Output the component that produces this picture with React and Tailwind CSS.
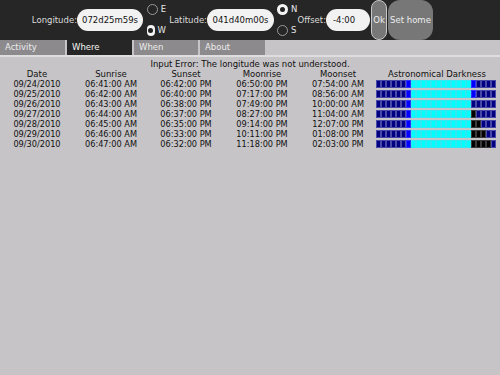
import React from "react";

const rows = [
  ["09/24/2010", "06:41:00 AM", "06:42:00 PM", "06:50:00 PM", "07:54:00 AM", "b1"],
  ["09/25/2010", "06:42:00 AM", "06:40:00 PM", "07:17:00 PM", "08:56:00 AM", "b1"],
  ["09/26/2010", "06:43:00 AM", "06:38:00 PM", "07:49:00 PM", "10:00:00 AM", "n0"],
  ["09/27/2010", "06:44:00 AM", "06:37:00 PM", "08:27:00 PM", "11:04:00 AM", "k1"],
  ["09/28/2010", "06:45:00 AM", "06:35:00 PM", "09:14:00 PM", "12:07:00 PM", "k2"],
  ["09/29/2010", "06:46:00 AM", "06:33:00 PM", "10:11:00 PM", "01:08:00 PM", "k3"],
  ["09/30/2010", "06:47:00 AM", "06:32:00 PM", "11:18:00 PM", "02:03:00 PM", "k4"],
];

function cellsFor(kind) {
  const c = [];
  for (let i = 0; i < 24; i++) {
    if (i < 6) c.push("n");
    else if (i === 6) c.push("b");
    else if (i <= 18) c.push("c");
    else c.push("n");
  }
  if (kind === "b1") c[19] = "b";
  if (kind[0] === "k") {
    const k = parseInt(kind[1], 10);
    for (let i = 0; i < k; i++) c[19 + i] = "k";
  }
  return c;
}

const cellCls = {
  n: "bg-[#000080] border-[#4848a8]",
  b: "bg-[#0000ff] border-[#3030ff]",
  c: "bg-[#00ffff] border-[#30e8f0]",
  k: "bg-[#000000] border-[#3a3a3a]",
};

function Bar({ kind }) {
  return (
    <div className="flex h-[8px] w-[120px]">
      {cellsFor(kind).map((t, i) => (
        <div key={i} className={"w-[5px] h-[8px] border " + cellCls[t]} />
      ))}
    </div>
  );
}

function Radio({ label, checked }) {
  return (
    <div className="flex items-center h-[11px]">
      {checked ? (
        <div className="w-[11px] h-[11px] rounded-full bg-[#f4f4f4] flex items-center justify-center">
          <div className="w-[5px] h-[5px] rounded-full bg-[#222]" />
        </div>
      ) : (
        <div className="w-[11px] h-[11px] rounded-full border border-[#9a9a9a]" />
      )}
      <span className="ml-[3px] text-[8.5px] text-[#e6e6e6] leading-none">{label}</span>
    </div>
  );
}

function Pill({ w, children, justify = "justify-center" }) {
  return (
    <div className={"shrink-0 h-[22px] rounded-full bg-[#f2f2f2] flex items-center text-[8.5px] text-[#111] whitespace-nowrap " + justify + " " + w}>
      {children}
    </div>
  );
}

function Label({ w, children }) {
  return (
    <div className={"shrink-0 flex justify-end text-[8.5px] text-[#dcdcdc] whitespace-nowrap " + w}>{children}</div>
  );
}

export default function App() {
  return (
    <div className="w-[500px] h-[375px] bg-[#c6c4c6] overflow-hidden" style={{ fontFamily: '"DejaVu Sans", sans-serif' }}>
      <div className="h-[40px] bg-[#262626] flex items-center pl-[31px]">
        <Label w="w-[46px]">Longitude:</Label>
        <Pill w="w-[66px]">072d25m59s</Pill>
        <div className="shrink-0 ml-[4px] h-[40px] flex flex-col justify-between py-[4px] w-[19px]">
          <Radio label="E" />
          <Radio label="W" checked />
        </div>
        <Label w="w-[41px]">Latitude:</Label>
        <Pill w="w-[67px]">041d40m00s</Pill>
        <div className="shrink-0 ml-[3px] h-[40px] flex flex-col justify-between py-[4px] w-[21px]">
          <Radio label="N" checked />
          <Radio label="S" />
        </div>
        <Label w="w-[28px]">Offset:</Label>
        <Pill w="w-[44px] pl-[7px]" justify="justify-start">-4:00</Pill>
        <div className="shrink-0 ml-[1px] h-[40px] w-[16px] rounded-full border border-[#c8c8c8] bg-[#777777] flex items-center justify-center text-[8.5px] text-[#eeeeee]">
          Ok
        </div>
        <div className="shrink-0 ml-[1px] h-[40px] w-[45px] rounded-[12px] bg-[#777777] flex items-center justify-center text-[8.5px] text-[#eeeeee] whitespace-nowrap">
          Set home
        </div>
      </div>
      <div className="h-[15px] flex gap-[2px]">
        <div className="w-[65px] bg-[#8c8a8c] text-[8.5px] text-[#ececec] pl-[5px] flex items-center">Activity</div>
        <div className="w-[65px] bg-[#262626] text-[8.5px] text-[#f4f4f4] pl-[5px] flex items-center">Where</div>
        <div className="w-[64px] bg-[#8c8a8c] text-[8.5px] text-[#ececec] pl-[5px] flex items-center">When</div>
        <div className="w-[65px] bg-[#8c8a8c] text-[8.5px] text-[#ececec] pl-[5px] flex items-center">About</div>
      </div>
      <div className="h-[2px] bg-[#dedede]" />
      <div className="pt-[2px] text-[#111]">
        <div className="h-[10px] leading-[10px] text-center text-[8.5px]">Input Error: The longitude was not understood.</div>
        <div className="flex h-[10px] leading-[10px] text-[8.5px] text-center">
          <div className="w-[74px]">Date</div>
          <div className="w-[74px]">Sunrise</div>
          <div className="w-[76px]">Sunset</div>
          <div className="w-[76px]">Moonrise</div>
          <div className="w-[76px]">Moonset</div>
          <div className="w-[122px]">Astronomical Darkness</div>
        </div>
        {rows.map((r) => (
          <div key={r[0]} className="flex h-[10px] leading-[10px] text-[8.2px] text-center items-center">
            <div className="w-[74px]">{r[0]}</div>
            <div className="w-[74px]">{r[1]}</div>
            <div className="w-[76px]">{r[2]}</div>
            <div className="w-[76px]">{r[3]}</div>
            <div className="w-[76px]">{r[4]}</div>
            <div className="w-[122px] flex">
              <Bar kind={r[5]} />
            </div>
          </div>
        ))}
      </div>
    </div>
  );
}
